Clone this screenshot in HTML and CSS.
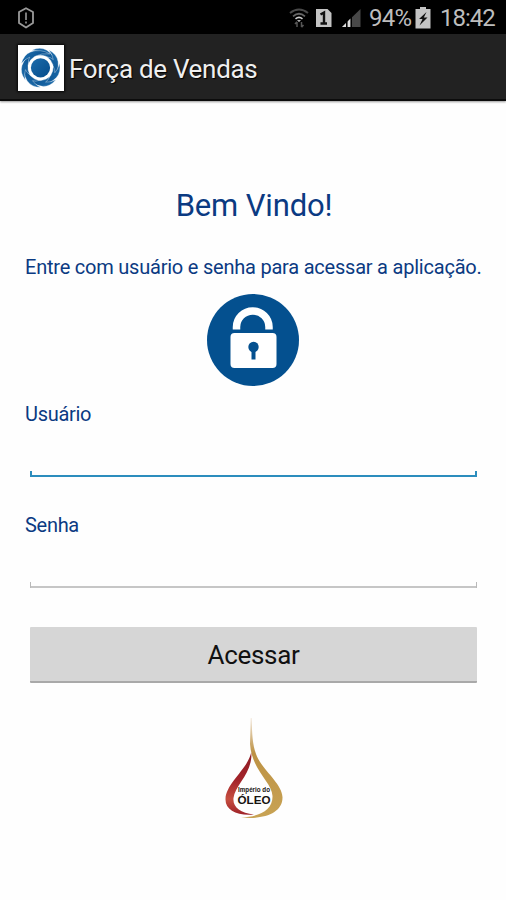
FILE: index.html
```html
<!DOCTYPE html>
<html lang="pt-BR">
<head>
    <meta charset="UTF-8" />
    <meta name="viewport" content="width=device-width, initial-scale=1.0" />
    <title>Força de Vendas</title>
    <link rel="stylesheet" href="styles.css">
</head>

<body>
    <div class="status-bar">
        <svg class="alert-icon" width="18" height="22" viewBox="0 0 18 22">
            <path d="M9 1.2 L16 5 V16 L9 20.5 L2 16 V5 Z" fill="none" stroke="#9a9a9a" stroke-width="1.8" stroke-linejoin="round" />
            <path d="M9 5.5 V13 M9 14.5 V16.6" stroke="#9a9a9a" stroke-width="1.6" />
        </svg>

        <!-- wifi, SIM, sinal -->
        <svg class="wifi-icon" width="20" height="20" viewBox="0 0 20 20" fill="none">
            <path d="M1 5 Q10 -2 19 5" stroke="#4a4a4a" stroke-width="2" />
            <path d="M4 8.3 Q10 3.2 16 8.3" stroke="#666" stroke-width="1.7" />
            <path d="M6.5 10.8 Q10 8 13.5 10.8" stroke="#ccc" stroke-width="1.6" />
            <path d="M8 12 H12 L10 14.3 Z" fill="#aaa" />
            <path d="M8 19 V14 M6 16 L8 13.8 M12.5 14 V19 M14.5 17 L12.5 19.2" stroke="#555" stroke-width="1.5" />
        </svg>
        <svg class="sim-icon" width="16" height="20" viewBox="0 0 16 20">
            <path d="M0 1 H11.5 L15.5 5 V19 H0 Z" fill="#c4c4c4" />
            <path d="M4.5 6.5 L8 4.5 V15.5 M4.5 15.5 H11" fill="none" stroke="#111" stroke-width="2.4" />
        </svg>
        <svg class="signal-icon" width="19" height="19" viewBox="0 0 19 19">
            <path d="M0 18 L18.5 0 V18 Z" fill="#484848" />
            <path d="M0 18 L4 14 V18 Z M5.5 18 V12.5 L8.5 9.6 V18 Z" fill="#ddd" />
            <path d="M4.7 12 V18 M9.3 8 V18" stroke="#000" stroke-width="1.3" />
        </svg>
        <span class="battery-level">94%</span>
        <svg class="battery-icon" width="16" height="22" viewBox="0 0 16 22">
            <path d="M5 0 H11 V2 H15.5 V21.5 H.5 V2 H5 Z" fill="#c4c4c4" />
            <path d="M11.5 5 L4 12 H7.5 L4.5 18.5 L12.5 10.5 H8.8 Z" fill="#111" />
        </svg>
        <span class="clock">18:42</span>
    </div>

    <header class="app-bar">
        <svg class="app-logo" width="46" height="46" viewBox="0 0 46 46">
            <defs>
                <linearGradient id="blue" x1="0" y1="0" x2="1" y2="1">
                    <stop offset="0" stop-color="#1d6cab" />
                    <stop offset="1" stop-color="#054c8b" />
                </linearGradient>
                <path id="blade" d="M-11 -15 Q-4 -20 3 -17.5 Q12 -14 15.5 -4 Q10.5 -10 3 -11.8 Q-2 -12.6 -6 -10.5 Q-4 -13.6 -1 -14.4 Q-5 -16 -11 -15 Z" />
            </defs>
            <rect width="46" height="46" fill="#fff" />
            <g transform="translate(22.5 22.8)" fill="url(#blue)">
                <circle r="9.6" />
                <g stroke="#fff" stroke-width=".3">
                    <use href="#blade" transform="rotate(10) scale(1.05)" />
                    <use href="#blade" transform="rotate(61.4) scale(1.05)" />
                    <use href="#blade" transform="rotate(112.9) scale(1.05)" />
                    <use href="#blade" transform="rotate(164.3) scale(1.05)" />
                    <use href="#blade" transform="rotate(215.7) scale(1.05)" />
                    <use href="#blade" transform="rotate(267.1) scale(1.05)" />
                    <use href="#blade" transform="rotate(318.6) scale(1.05)" />
                </g>
            </g>
        </svg>
        <span class="app-title">Força de Vendas</span>
    </header>

    <main class="login">
        <h1>Bem Vindo!</h1>
        <p class="subtitle">Entre com usuário e senha para acessar a aplicação.</p>

        <svg class="lock" width="92" height="92" viewBox="0 0 92 92">
            <circle cx="46" cy="46" r="46" fill="#04508f" />
            <path d="M29.5 35.5 V33 A16.2 16 0 0 1 62 33 V35.5" fill="none" stroke="#fff" stroke-width="7.5" />
            <rect x="23.5" y="39" width="46" height="35" rx="4" fill="#fff" />
            <circle cx="46.5" cy="53" r="5.2" fill="#04508f" />
            <path d="M46.5 54 V65.5" stroke="#04508f" stroke-width="4" />
        </svg>

        <label for="usuario">Usuário</label>
        <div class="field active"><input type="text" id="usuario" /></div>

        <label for="senha">Senha</label>
        <div class="field"><input type="password" id="senha" /></div>

        <button type="button">Acessar</button>

        <svg class="brand" width="64" height="104" viewBox="0 0 64 104">
            <defs>
                <linearGradient id="red" x1="0" y1="0" x2="0" y2="1">
                    <stop offset="0" stop-color="#8d1c25" />
                    <stop offset=".45" stop-color="#a3242a" />
                    <stop offset=".75" stop-color="#c64f40" />
                    <stop offset="1" stop-color="#9e2228" />
                </linearGradient>
                <linearGradient id="gold" x1="0" y1="0" x2="0" y2="1">
                    <stop offset="0" stop-color="#f3e8dc" />
                    <stop offset=".35" stop-color="#bd9244" />
                    <stop offset="1" stop-color="#c8a354" />
                </linearGradient>
            </defs>
            <path d="M29.3 36 C26 53 4 67 3.5 83 C3.2 94 15 100 32 98.5 C18 97 10.5 91 11.5 82 C13 69 31 57 29.3 36 Z" fill="url(#red)" />
            <path d="M28.7 2 L29.7 2 C30 18 30.5 28 34 38 C39 53 60 67 60.5 81 C61 97 42 104 19 101.5 C37 101 51 94 50.5 80 C50 66 30 55 28 28 Z" fill="url(#gold)" />
            <text x="32" y="75.5" class="brand-small" textLength="32" lengthAdjust="spacingAndGlyphs">Império do</text>
            <text x="32" y="88" class="brand-big" textLength="33" lengthAdjust="spacingAndGlyphs">ÓLEO</text>
        </svg>
    </main>
</body>
</html>
```
FILE: styles.css
```css
* {
    box-sizing: border-box;
}

body {
    font-family: Roboto, "Liberation Sans", sans-serif;
    margin: 0;
    min-height: 900px;
    background: #fefefe;
    color: #0b3a82;
}

.status-bar {
    display: flex;
    align-items: center;
    height: 34px;
    padding: 2px 11px 0 17px;
    background: #000;
    color: #bdbdbd;
    font-size: 24px;
    line-height: 32px;
}

.wifi-icon {
    margin-left: auto;
}

.sim-icon {
    margin-left: 7px;
}

.signal-icon {
    margin-left: 10px;
}

.battery-level {
    width: 43px;
    margin-left: 8px;
    letter-spacing: -0.8px;
}

.battery-icon {
    margin-left: 3px;
}

.clock {
    width: 55px;
    margin-left: 9px;
    letter-spacing: -1px;
}

.app-bar {
    display: flex;
    align-items: center;
    height: 67px;
    padding: 0 18px;
    background: #222;
    border-bottom: 2px solid #0c0c0c;
    box-shadow: 0 1px 2px rgba(0,0,0,0.4);
}

.app-logo {
    margin-top: 2px;
    box-shadow: 0 0 2px 1px #080808;
}

.app-title {
    margin: 4px 0 0 5px;
    color: #efefef;
    font-size: 26px;
    letter-spacing: -0.3px;
    text-shadow: 1px 1px 1px #000;
}

.login {
    display: flex;
    flex-direction: column;
    padding: 86px 25px 0;
}

h1 {
    margin: 0;
    padding-left: 2px;
    font-size: 31px;
    font-weight: 400;
    line-height: 38px;
    letter-spacing: -0.15px;
    text-align: center;
}

.subtitle {
    margin: 30px 0 0;
    font-size: 20px;
    line-height: 24px;
    letter-spacing: -0.22px;
    white-space: nowrap;
}

.lock {
    align-self: center;
    margin-top: 15px;
}

label {
    margin-top: 16px;
    font-size: 20px;
    line-height: 24px;
    letter-spacing: -0.3px;
}

.field {
    height: 51px;
    margin: 0 4px 20px 5px;
    padding-bottom: 2px;
    /* base line with short ticks at both ends */
    background:
        linear-gradient(#b9b9b9, #b9b9b9) left bottom / 1px 6px no-repeat,
        linear-gradient(#b9b9b9, #b9b9b9) right bottom / 1px 6px no-repeat,
        linear-gradient(#c6c6c6, #c6c6c6) left bottom / 100% 2px no-repeat;
}

.field.active {
    background:
        linear-gradient(#2c8dbd, #2c8dbd) left bottom / 2px 6px no-repeat,
        linear-gradient(#2c8dbd, #2c8dbd) right bottom / 2px 6px no-repeat,
        linear-gradient(#2c8dbd, #2c8dbd) left bottom / 100% 2px no-repeat;
}

.field input {
    width: 100%;
    height: 42px;
    padding: 0 10px;
    border: none;
    outline: none;
    background: transparent;
    font: inherit;
    font-size: 20px;
}

button {
    height: 56px;
    margin: 19px 4px 0 5px;
    padding: 2px 0 0;
    border: none;
    border-bottom: 2px solid #a9a9a9;
    border-radius: 1px;
    background: #d6d6d6;
    color: #111;
    font-family: inherit;
    font-size: 26px;
    letter-spacing: -0.3px;
}

.brand {
    align-self: center;
    margin: 33px 0 0 2px;
}

.brand-small,
.brand-big {
    font-family: "Liberation Sans", sans-serif;
    font-weight: bold;
    text-anchor: middle;
    fill: #171310;
}

.brand-small {
    font-size: 6.5px;
}

.brand-big {
    font-size: 11.5px;
}
```
